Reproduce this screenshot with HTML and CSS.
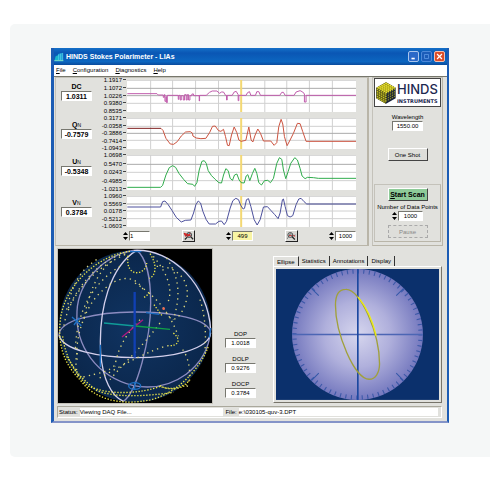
FILE: index.html
```html
<!DOCTYPE html>
<html lang="en">
<head>
    <meta charset="UTF-8">
    <meta name="viewport" content="width=device-width, initial-scale=1.0">
    <title>HINDS Stokes Polarimeter</title>
    <link rel="stylesheet" href="styles.css">
</head>
<body>
    <div class="card">
        <div class="window">
            <div class="titlebar">
                <svg class="app-icon" viewBox="0 0 30 30">
                    <path d="M2 24L5 13L12 10V24Z" fill="#19b5c9"/>
                    <path d="M12 24V6L26 2V24Z" fill="#1fa0d8"/>
                    <path d="M14 8V24M20 5V24M26 3V25" stroke="#5de0e8" stroke-width="2"/>
                    <path d="M1 26H28" stroke="#7fe9c8" stroke-width="3"/>
                </svg>
                <span class="title">HINDS Stokes Polarimeter - LIAs</span>
                <button class="win-btn" aria-label="Minimize"><svg viewBox="0 0 11 11"><path d="M3 8H7" stroke="#fff" stroke-width="2"/></svg></button>
                <button class="win-btn dim" aria-label="Maximize"><svg viewBox="0 0 11 11"><path d="M3 3H8V8H3Z" fill="none" stroke="#5f9ae6"/></svg></button>
                <button class="win-btn close" aria-label="Close"><svg viewBox="0 0 11 11"><path d="M2.500 2.500L8.500 8.500M8.500 2.500L2.500 8.500" stroke="#fff" stroke-width="1.5"/></svg></button>
            </div>
            <nav class="menu">
                <button><u>F</u>ile</button>
                <button><u>C</u>onfiguration</button>
                <button><u>D</u>iagnostics</button>
                <button><u>H</u>elp</button>
            </nav>

            <div class="top">
                <section class="charts">
                    <div class="channels">
                        <div class="readout"><label for="dc">DC</label><input id="dc" value="1.0311" readonly></div>
                        <div class="axis"><span>1.1917</span><span>1.1072</span><span>1.0226</span><span>0.9380</span><span>0.8535</span></div>
                        <svg class="plot" viewBox="380 240 688 96" preserveAspectRatio="none">
                            <path class="grid" d="M451 240V336M517 240V336M586 240V336M655 240V336M794 240V336M860 240V336M928 240V336M997 240V336M380 310H1068M380 241H1068"/>
                            <path class="grid dark" d="M380 265H1068M380 287H1068"/>
                            <path class="cursor" d="M723 240V336"/>
                            <path class="trace dc" d="M381 281H470L474 285H489V292H492V284H494V304H497V290H499V308H501V286H534V298H536V286H540V300H543V287H549V300H553V284H558V300H561V284H565V300H569V287H575V282H580V287H597V303H598V286H618L628 277L636 273H650L658 280L664 276H670L676 286H679V300H681V286H696L702 276L708 274L714 284V302H716V286H738L742 278L748 275L752 286H766L770 275H776L781 286H839L845 277H850L855 286H882L888 276L900 272L908 276L913 282V306H918V286H1068"/>
                        </svg>

                        <div class="readout"><label for="q">Q<small>N</small></label><input id="q" value="-0.7579" readonly></div>
                        <div class="axis"><span>0.3171</span><span>-0.0358</span><span>-0.3886</span><span>-0.7414</span><span>-1.0943</span></div>
                        <svg class="plot" viewBox="380 354 688 93" preserveAspectRatio="none">
                            <path class="grid" d="M451 354V447M517 354V447M586 354V447M655 354V447M794 354V447M860 354V447M928 354V447M997 354V447M380 379H1068M380 421H1068M380 355H1068"/>
                            <path class="grid dark" d="M380 400H1068"/>
                            <path class="cursor" d="M723 354V447"/>
                            <path class="trace q" d="M482 385L488 391L497 415L510 432L520 433L531 425L543 408L556 396L570 395L577 400L578 408L588 414L602 416L617 415L628 398L637 379L645 378L655 392L662 394L670 388L676 410L682 436L687 437L694 405L702 381L710 398L716 420L723 424L737 421L746 381L753 420L758 426L765 405L773 387L781 400L790 423H812L822 436L830 428L836 380L843 358L848 372L853 410L861 437L870 420L880 400L892 370L900 371L908 395L918 424H1068"/>
                            <path class="trace q-flat" d="M381 385H482"/>
                        </svg>

                        <div class="readout"><label for="u">U<small>N</small></label><input id="u" value="-0.5348" readonly></div>
                        <div class="axis"><span>1.0698</span><span>0.5470</span><span>0.0243</span><span>-0.4985</span><span>-1.0213</span></div>
                        <svg class="plot" viewBox="380 465 688 105" preserveAspectRatio="none">
                            <path class="grid" d="M451 465V570M517 465V570M586 465V570M655 465V570M794 465V570M860 465V570M928 465V570M997 465V570M380 517H1068M380 542H1068M380 466H1068"/>
                            <path class="grid dark" d="M380 493H1068"/>
                            <path class="cursor" d="M723 465V570"/>
                            <path class="trace u" d="M381 562H481L487 556L497 525L507 503L517 497L526 502L536 520L550 538L562 551L578 553L583 559L590 548L597 510L605 484L612 482L618 490L624 512L634 527L645 538L656 548L664 549L670 525L677 506L684 512L690 535L697 541L703 525L710 522L717 540L723 548L732 549L738 528L743 524L749 542L757 520L764 505L770 520L776 548L784 555L793 542L803 541L811 548L820 535L830 490L838 473L845 478L850 510L857 536L864 515L872 490L884 473L892 480L900 505L906 528L915 536L922 532L940 533L955 535H1068"/>
                        </svg>

                        <div class="readout"><label for="v">V<small>N</small></label><input id="v" value="0.3784" readonly></div>
                        <div class="axis"><span>1.0960</span><span>0.5569</span><span>0.0178</span><span>-0.5212</span><span>-1.0603</span></div>
                        <svg class="plot" viewBox="380 589 688 93" preserveAspectRatio="none">
                            <path class="grid" d="M451 589V682M517 589V682M586 589V682M655 589V682M794 589V682M860 589V682M928 589V682M997 589V682M380 634H1068M380 657H1068M380 590H1068"/>
                            <path class="grid dark" d="M380 613H1068"/>
                            <path class="cursor" d="M723 589V682"/>
                            <path class="trace v" d="M381 622H481L487 606L494 604L503 614L515 632L528 653L543 667L555 662L572 661L580 640L587 615L594 604L601 610L608 635L618 660L627 673H646L656 665L664 664L672 675L679 665L690 625L698 603L707 596L715 600L722 618L729 628L733 626L739 600L745 597L752 620L762 660L771 676L780 660L790 622L802 621L812 632L824 645L834 657L840 640L847 600L850 598L855 620L862 648L870 652L878 648L888 615L896 598L903 596L912 606L920 613H1068"/>
                        </svg>
                    </div>

                    <div class="range">
                        <div class="spin first">
                            <svg class="arrows" viewBox="0 0 5 10"><path d="M0 4H5L2.5 1ZM0 6H5L2.5 9Z"/></svg>
                            <input aria-label="First point" value="1">
                        </div>
                        <button class="tool" aria-label="Zoom in">
                            <svg viewBox="0 0 36 32"><path d="M4 8L12 15L8 18Z" fill="#d02020" stroke="#d02020" stroke-width="2"/><circle cx="20" cy="13" r="8" fill="#8fd0dc" stroke="#333" stroke-width="3"/><path d="M26 19L33 27M14 20L6 28" stroke="#222" stroke-width="4"/><path d="M3 8L25 16M24 8L14 18" stroke="#d02020" stroke-width="4"/></svg>
                        </button>
                        <div class="spin">
                            <svg class="arrows" viewBox="0 0 5 10"><path d="M0 4H5L2.5 1ZM0 6H5L2.5 9Z"/></svg>
                            <input class="current" aria-label="Current point" value="499">
                        </div>
                        <button class="tool" aria-label="Zoom out">
                            <svg viewBox="0 0 36 32"><circle cx="14" cy="13" r="8" fill="#cfd8d8" stroke="#444" stroke-width="3"/><path d="M4 26L14 8L20 18L31 13" fill="none" stroke="#444" stroke-width="2"/><path d="M20 19L29 28" stroke="#222" stroke-width="4"/><path d="M10 15H18M24 14L30 18" stroke="#d02020" stroke-width="3"/></svg>
                        </button>
                        <div class="spin">
                            <svg class="arrows" viewBox="0 0 5 10"><path d="M0 4H5L2.5 1ZM0 6H5L2.5 9Z"/></svg>
                            <input aria-label="Last point" value="1000">
                        </div>
                    </div>
                </section>

                <aside class="controls">
                    <div class="logo">
                        <svg viewBox="0 0 60 66">
                            <path d="M30 1L59 17V49L30 65L1 49V17Z" fill="#17203a"/>
                            <path d="M30 1L59 17L30 34L1 17Z" fill="#a8a218"/>
                            <path d="M1 17L30 34V65L1 49Z" fill="#5c5c18"/>
                            <path class="beads bright" d="M30 4L56 18M24 8L50 22M18 11L44 25M12 14L38 28M6 17L31 31"/>
                            <path class="beads" d="M4 22L29 36M4 29L29 43M4 36L29 50M4 43L29 57M5 49L29 63"/>
                            <path class="beads shade" d="M56 22L31 36M56 29L31 43M56 36L31 50M56 43L31 57"/>
                        </svg>
                        <div class="brand"><span class="name">HINDS</span><span class="sub">INSTRUMENTS</span></div>
                    </div>
                    <label for="wave">Wavelength</label>
                    <input id="wave" class="wave" value="1550.00">
                    <button class="btn shot">One Shot</button>
                    <div class="scan">
                        <button class="btn start"><u>S</u>tart Scan</button>
                        <label for="points">Number of Data Points</label>
                        <div class="spin">
                            <svg class="arrows" viewBox="0 0 5 10"><path d="M0 4H5L2.5 1ZM0 6H5L2.5 9Z"/></svg>
                            <input id="points" value="1000">
                        </div>
                        <button class="btn pause" disabled>Pause</button>
                    </div>
                </aside>
            </div>

            <div class="bottom">
                <svg class="sphere" viewBox="174 748 462 462">
                    <defs>
                        <radialGradient id="globe"><stop offset="0" stop-color="#103462"/><stop offset="1" stop-color="#0b274c"/></radialGradient>
                    </defs>
                    <rect x="174" y="748" width="462" height="462" fill="#000"/>
                    <circle cx="405" cy="980" r="228" fill="url(#globe)"/>
                    <!-- great circles -->
                    <path class="arc back" d="M177 1006C180 915 625 915 632 1000M400 752C320 765 235 840 231 935C225 1040 290 1130 400 1158C520 1180 625 1100 632 990M410 752C440 775 452 840 452 910C452 1020 410 1180 370 1205"/>
                    <path class="arc" d="M177 1006C195 1095 620 1100 632 1000M410 752C330 800 295 930 302 1060C308 1140 335 1190 370 1205M400 752C520 745 625 860 632 990"/>
                    <path class="mark" d="M390 756H424M438 939L478 944M301 1035V1102M632 985L628 1014M216 952L244 978M238 954L222 976M404 1146V1170"/>
                    <ellipse class="mark" cx="404" cy="1159" rx="18" ry="10"/>
                    <!-- measured states -->
                    <path class="dots" d="M390 755C300 765 195 850 181 960C170 1060 210 1110 240 1140C290 1210 380 1212 430 1204C520 1195 600 1110 625 1040"/>
                    <path class="dots" d="M384 768C375 840 440 825 440 790M450 762C475 800 465 830 448 836"/>
                    <path class="dots" d="M188 1010C195 1070 225 1120 262 1158C330 1190 430 1180 480 1160C510 1170 545 1170 570 1140"/>
                    <path class="dots" d="M200 1070C225 1110 235 1130 290 1172C340 1195 440 1190 520 1178"/>
                    <path class="dots" d="M480 1158C500 1170 530 1172 560 1155"/>
                    <path class="dots" d="M450 880L430 895M462 915L486 948M520 1000C545 1020 535 1040 505 1038"/>
                    <path class="dots wide" d="M375 765C270 810 200 900 190 990M360 800C280 850 230 930 226 1050"/>
                    <path class="dots wide" d="M205 925C250 830 320 770 380 762M232 1080C225 1040 240 950 290 890C350 825 400 820 430 870"/>
                    <path class="dots wide" d="M290 780C240 810 215 860 200 930M335 785C290 820 265 880 250 970"/>
                    <path class="dots wide" d="M470 800C540 800 570 850 560 900C545 950 520 980 500 940"/>
                    <path class="dots wide" d="M500 775C535 830 545 880 520 960M460 770C510 830 520 880 500 915"/>
                    <path class="dots wide" d="M405 850C470 890 510 940 535 1010M420 960C370 1010 350 1060 345 1100"/>
                    <path class="dots wide" d="M505 1038C450 1050 360 1100 290 1140M480 970C420 1050 380 1080 330 1140M548 1050C570 1080 575 1130 560 1165"/>
                    <path class="dots wide" d="M600 900C610 930 620 980 615 1050M232 1060C225 1080 228 1110 234 1128M250 1132C300 1120 330 1115 345 1095"/>
                    <path d="M366 1012L429 960" stroke="#b01880" stroke-width="4"/>
                    <path d="M312 970L405 979" stroke="#109c98" stroke-width="4"/>
                    <path d="M405 979L510 989" stroke="#10a048" stroke-width="4"/>
                    <path d="M404 877V1074" stroke="#1040b4" stroke-width="7"/>
                    <circle cx="491" cy="927" r="4" fill="#f06a50"/>
                </svg>

                <div class="degrees">
                    <div class="readout plain"><label for="dop">DOP</label><input id="dop" value="1.0018" readonly></div>
                    <div class="readout plain"><label for="dolp">DOLP</label><input id="dolp" value="0.9276" readonly></div>
                    <div class="readout plain"><label for="docp">DOCP</label><input id="docp" value="0.3784" readonly></div>
                </div>

                <div class="views">
                    <div class="tabs" role="tablist">
                        <button role="tab" class="active" aria-selected="true">Ellipse</button>
                        <button role="tab">Statistics</button>
                        <button role="tab">Annotations</button>
                        <button role="tab">Display</button>
                    </div>
                    <div class="pane">
                        <svg viewBox="828 808 488 392">
                            <defs>
                                <radialGradient id="dial"><stop offset="0" stop-color="#d6d6ee"/><stop offset=".5" stop-color="#b0b0dc"/><stop offset="1" stop-color="#7478be"/></radialGradient>
                            </defs>
                            <rect x="828" y="808" width="488" height="392" fill="#0b306c"/>
                            <circle cx="1072" cy="1004" r="196" fill="url(#dial)"/>
                            <circle class="ticks" cx="1072" cy="1004" r="189" pathLength="360"/>
                            <path class="diag" d="M934 866L956 888M1210 866L1188 888M934 1142L956 1120M1210 1142L1188 1120"/>
                            <path d="M876 1004H1268" stroke="#4c66b4" stroke-width="5"/>
                            <path d="M1073 808V1200" stroke="#1c48a0" stroke-width="5"/>
                            <path d="M1037 869C1080 866 1138 1000 1138 1092C1138 1120 1125 1138 1107 1138C1063 1138 1006 1000 1006 916C1006 885 1018 869 1037 869Z" fill="none" stroke="#a0a03c" stroke-width="4"/>
                            <path d="M1074 892C1098 921 1118 965 1128 1008" fill="none" stroke="#eeee10" stroke-width="4"/>
                        </svg>
                    </div>
                </div>
            </div>

            <div class="status">
                <span>Status:</span><span class="field">Viewing DAQ File...</span>
                <span class="file">File:</span><span class="field wide">e:\030105-quv-3.DPT</span>
            </div>
        </div>
    </div>
</body>
</html>
```
FILE: styles.css
```css
body {
    font-family: "Liberation Sans", Arial, sans-serif;
    font-size: 6px;
    line-height: 8px;
    margin: 0;
    padding: 24px 0 32px 10px;
    background-color: #fff;
    color: #000;
}
* {
    box-sizing: border-box;
}
svg {
    display: block;
}
button, input {
    font: inherit;
    color: inherit;
    margin: 0;
    padding: 0;
}
.card {
    background-color: #f5f7f7;
    border-radius: 5px 0 0 5px;
    padding: 24px 41px 34px;
}
.window {
    background-color: #e1e1dd;
    border: solid #1c5cb4;
    border-width: 0 2px 2px 3px;
    border-bottom-color: #8494c8;
}

/* title bar and menu */
.titlebar {
    display: flex;
    align-items: center;
    gap: 2px;
    height: 17px;
    padding-right: 2px;
    background: linear-gradient(#1470c8, #0a56b4 30%, #0c66c0 80%, #0a4a9c);
}
.app-icon {
    width: 10px;
    height: 10px;
}
.title {
    flex: 1;
    color: #fff;
    font-size: 7px;
    font-weight: bold;
}
.win-btn {
    width: 11px;
    height: 11px;
    border: 1px solid #a8c4ec;
    border-radius: 2px;
    background-color: #2a68c8;
}
.win-btn.dim {
    border-color: #4c88d8;
    background-color: #1c5cb8;
}
.win-btn.close {
    border-color: #f4c0b0;
    background-color: #dc4c28;
}
.menu {
    display: flex;
    gap: 7px;
    padding: 1px 2px 2px;
    background-color: #fff;
    border-bottom: 1px solid #77776c;
}
.menu button {
    border: 0;
    background: none;
}

/* upper half */
.top {
    display: flex;
    gap: 3px;
    padding: 0 4px 0 1px;
}
.charts, .controls, .scan {
    border: 1px solid #b9b5a8;
    border-left-color: #c4c2ba;
    border-top-color: #c4c2ba;
}
.charts {
    flex: 1;
    border-right-width: 2px;
    padding: 2px 11px 3px 5px;
}
.channels {
    display: grid;
    grid-template-columns: 31px 35px 1fr;
    grid-template-rows: 32px 31px 35px 31px;
    row-gap: 6px;
}
.readout {
    display: flex;
    flex-direction: column;
    align-items: center;
    padding-top: 3px;
    font-size: 7px;
    font-weight: bold;
}
.readout small {
    font-size: 5px;
    font-weight: normal;
}
.readout.plain {
    padding: 0;
    font-size: 6px;
    font-weight: normal;
}
input {
    border: 1px solid;
    border-color: #77776f #fff #fff #77776f;
    background-color: #fff;
    text-align: center;
    height: 10px;
    width: 31px;
}
.axis {
    display: flex;
    flex-direction: column;
    justify-content: space-between;
    margin: -3px 1px -3px 0;
    text-align: right;
    line-height: 7px;
}
.axis span::after {
    content: "";
    display: inline-block;
    width: 3px;
    height: 1px;
    margin-left: 1px;
    vertical-align: 2px;
    background-color: #444;
}
.plot {
    width: 100%;
    height: 100%;
    background-color: #fff;
}
.plot path {
    fill: none;
    vector-effect: non-scaling-stroke;
}
.grid {
    stroke: #d0d0d0;
}
.grid.dark {
    stroke: #aaa;
}
.cursor {
    stroke: #f3d873;
    stroke-width: 2px;
}
.trace.dc {
    stroke: #c05cac;
}
.trace.q {
    stroke: #cc5440;
}
.trace.q-flat {
    stroke: #7c1c1c;
}
.trace.u {
    stroke: #30ac4c;
}
.trace.v {
    stroke: #4c509c;
}
.range {
    display: flex;
    justify-content: space-between;
    align-items: center;
    margin: 3px 0 0 62px;
    height: 12px;
}
.spin {
    display: flex;
    align-items: center;
    gap: 1px;
}
.spin.first input {
    text-align: left;
}
.spin input {
    width: 21px;
}
.spin .current {
    background-color: #f8f4a4;
}
.arrows {
    width: 5px;
    height: 10px;
}
.tool {
    width: 13px;
    height: 12px;
    border: 1px solid;
    border-color: #fff #222 #222 #fff;
    background-color: #d8d8d4;
}
.tool svg {
    width: 100%;
}

/* right column */
.controls {
    display: flex;
    flex-direction: column;
    align-items: center;
    width: 71px;
    padding: 0 1px 2px;
    text-align: center;
}
.logo {
    display: flex;
    align-items: center;
    gap: 1px;
    align-self: stretch;
    height: 29px;
    margin-bottom: 6px;
    padding-left: 1px;
    border: 1px solid #444;
    background-color: #fff;
}
.logo svg {
    width: 20px;
    height: 22px;
    flex: none;
}
.beads {
    fill: none;
    stroke: #c8c224;
    stroke-width: 4px;
    stroke-linecap: round;
    stroke-dasharray: 1 6;
}
.beads.bright {
    stroke: #f4ec3c;
}
.beads.shade {
    stroke: #8c8c24;
}
.brand {
    display: flex;
    flex-direction: column;
    gap: 1px;
    text-align: left;
    color: #1c2850;
}
.name {
    font: 500 13px/15px Inter, sans-serif;
}
.sub {
    font: bold 5px/6px "DejaVu Sans", sans-serif;
}
.wave {
    margin-bottom: 17px;
}
.btn {
    width: 40px;
    height: 13px;
    border: 1px solid;
    border-color: #fff #444 #444 #fff;
    background-color: #dededa;
}
.shot {
    margin-bottom: 23px;
}
.scan {
    display: flex;
    flex-direction: column;
    align-items: center;
    align-self: stretch;
    padding: 3px 0;
    white-space: nowrap;
}
.scan .start {
    background-color: #8ecb98;
    font-size: 7px;
    font-weight: bold;
    margin-bottom: 2px;
}
.scan .spin input {
    width: 25px;
}
.scan .pause {
    margin-top: 4px;
    border: 1px dashed #aaa;
    color: #888;
}

/* lower half */
.bottom {
    display: flex;
    padding: 2px 5px 2px 3px;
}
.sphere {
    width: 156px;
    height: 156px;
    border: 1px solid #c4c2ba;
    flex: none;
}
.sphere path, .sphere ellipse {
    fill: none;
}
.arc {
    stroke: #d4d0ec;
    stroke-width: 4px;
}
.arc.back {
    stroke: #8c8cc0;
}
.mark {
    stroke: #1c70c4;
    stroke-width: 4px;
}
.dots {
    stroke: #ece648;
    stroke-width: 4px;
    stroke-dasharray: 4 5;
}
.dots.wide {
    stroke: #dcd67c;
    stroke-dasharray: 4 12;
}
.degrees {
    display: flex;
    flex-direction: column;
    justify-content: flex-end;
    gap: 7px;
    margin: 0 17px 6px 12px;
}
.views {
    flex: 1;
    padding-top: 8px;
}
.tabs {
    display: flex;
    height: 10px;
}
.tabs button {
    border: solid #333;
    border-width: 0 1px 0 0;
    background: none;
    padding: 0 3px;
    height: 10px;
    white-space: nowrap;
}
.tabs .active {
    border-top: 1px solid #fff;
    border-left: 1px solid #fff;
}
.pane {
    border: 1px solid;
    border-color: #fff #77746a #77746a #fff;
    padding: 2px;
}
.ticks {
    fill: none;
    stroke: #3c58a8;
    stroke-width: 13px;
    stroke-dasharray: 1 4;
}
.diag {
    stroke: #3458a8;
    stroke-width: 3px;
}
.status {
    display: flex;
    align-items: center;
    gap: 2px;
    margin: 0 5px 3px 3px;
    padding: 1px 3px 1px 1px;
    border: 1px solid;
    border-color: #aaa89c #fff #fff #aaa89c;
}
.field {
    flex: 1 1 145px;
    background-color: #fff;
}
.field.wide {
    flex-basis: 201px;
}
```
